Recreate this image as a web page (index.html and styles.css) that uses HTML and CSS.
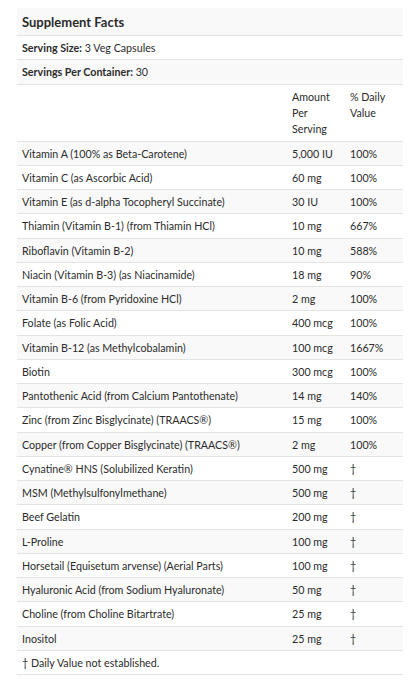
FILE: index.html
```html
<!DOCTYPE html>
<html>
<head>
<meta charset="utf-8">
<link rel="stylesheet" href="styles.css">
</head>
<body>
<div class="wrap">
<table class="facts">
  <colgroup><col class="c1"><col class="c2"><col class="c3"></colgroup>
  <tbody>
    <tr class="title"><td colspan="3">Supplement Facts</td></tr>
    <tr><td colspan="3"><b>Serving Size:</b> 3 Veg Capsules</td></tr>
    <tr><td colspan="3"><b>Servings Per Container:</b> 30</td></tr>
    <tr class="head"><td></td><td>Amount Per Serving</td><td>% Daily Value</td></tr>
    <tr><td>Vitamin A (100% as Beta-Carotene)</td><td>5,000 IU</td><td>100%</td></tr>
    <tr><td>Vitamin C (as Ascorbic Acid)</td><td>60 mg</td><td>100%</td></tr>
    <tr><td>Vitamin E (as d-alpha Tocopheryl Succinate)</td><td>30 IU</td><td>100%</td></tr>
    <tr><td>Thiamin (Vitamin B-1) (from Thiamin HCl)</td><td>10 mg</td><td>667%</td></tr>
    <tr><td>Riboflavin (Vitamin B-2)</td><td>10 mg</td><td>588%</td></tr>
    <tr><td>Niacin (Vitamin B-3) (as Niacinamide)</td><td>18 mg</td><td>90%</td></tr>
    <tr><td>Vitamin B-6 (from Pyridoxine HCl)</td><td>2 mg</td><td>100%</td></tr>
    <tr><td>Folate (as Folic Acid)</td><td>400 mcg</td><td>100%</td></tr>
    <tr><td>Vitamin B-12 (as Methylcobalamin)</td><td>100 mcg</td><td>1667%</td></tr>
    <tr><td>Biotin</td><td>300 mcg</td><td>100%</td></tr>
    <tr><td>Pantothenic Acid (from Calcium Pantothenate)</td><td>14 mg</td><td>140%</td></tr>
    <tr><td>Zinc (from Zinc Bisglycinate) (TRAACS®)</td><td>15 mg</td><td>100%</td></tr>
    <tr><td>Copper (from Copper Bisglycinate) (TRAACS®)</td><td>2 mg</td><td>100%</td></tr>
    <tr><td>Cynatine® HNS (Solubilized Keratin)</td><td>500 mg</td><td>†</td></tr>
    <tr><td>MSM (Methylsulfonylmethane)</td><td>500 mg</td><td>†</td></tr>
    <tr><td>Beef Gelatin</td><td>200 mg</td><td>†</td></tr>
    <tr><td>L-Proline</td><td>100 mg</td><td>†</td></tr>
    <tr><td>Horsetail (Equisetum arvense) (Aerial Parts)</td><td>100 mg</td><td>†</td></tr>
    <tr><td>Hyaluronic Acid (from Sodium Hyaluronate)</td><td>50 mg</td><td>†</td></tr>
    <tr><td>Choline (from Choline Bitartrate)</td><td>25 mg</td><td>†</td></tr>
    <tr><td>Inositol</td><td>25 mg</td><td>†</td></tr>
    <tr class="foot"><td colspan="3">† Daily Value not established.</td></tr>
  </tbody>
</table>
</div>
</body>
</html>
```
FILE: styles.css
```css
html, body {
  margin: 0;
  padding: 0;
  background: #fff;
}
.wrap {
  padding: 8px 16px 0 17px;
}
.facts {
  width: 386px;
  border-collapse: collapse;
  table-layout: fixed;
  font-family: Lato, "Open Sans", sans-serif;
  font-size: 10.7px;
  color: #2b2b2b;
}
.c1 { width: 270px; }
.c2 { width: 58px; }
.c3 { width: 58px; }
.facts td {
  padding: 4px 5px;
  line-height: 15.25px;
  border-bottom: 1px solid #e3e3e3;
  vertical-align: top;
  text-align: left;
}
.facts tr:nth-child(odd) td {
  background: #f9f9f9;
}
.facts b {
  font-weight: 700;
}
.facts .title td {
  font-size: 13px;
  font-weight: 700;
  line-height: 19px;
  padding-top: 5px;
  padding-bottom: 3px;
}
.facts .head td {
  line-height: 16px;
}
```
